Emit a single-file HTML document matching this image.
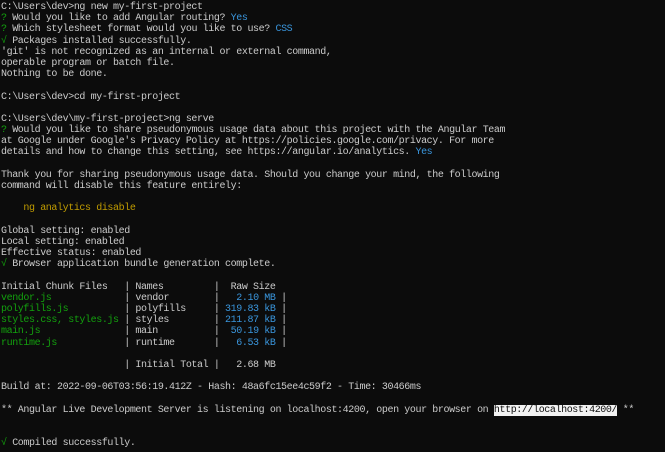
<!DOCTYPE html>
<html><head><meta charset="utf-8"><style>
html,body{margin:0;padding:0;background:#0c0c0c;width:665px;height:452px;overflow:hidden}
pre{margin:0;position:absolute;left:1px;top:2px;font-family:"Liberation Mono",monospace;font-size:10px;letter-spacing:-0.4px;line-height:11.18px;color:#cccccc;white-space:pre}
.g{color:#13a10e}.c{color:#3a96dd}.y{color:#c19c00}
.h{background:#f2f2f2;color:#0c0c0c}
</style></head><body><pre>C:\Users\dev&gt;ng new my-first-project
<span class="g">?</span> Would you like to add Angular routing? <span class="c">Yes</span>
<span class="g">?</span> Which stylesheet format would you like to use? <span class="c">CSS</span>
<span class="g">√</span> Packages installed successfully.
'git' is not recognized as an internal or external command,
operable program or batch file.
Nothing to be done.

C:\Users\dev&gt;cd my-first-project

C:\Users\dev\my-first-project&gt;ng serve
<span class="g">?</span> Would you like to share pseudonymous usage data about this project with the Angular Team
at Google under Google's Privacy Policy at https://policies.google.com/privacy. For more
details and how to change this setting, see https://angular.io/analytics. <span class="c">Yes</span>

Thank you for sharing pseudonymous usage data. Should you change your mind, the following
command will disable this feature entirely:

    <span class="y">ng analytics disable</span>

Global setting: enabled
Local setting: enabled
Effective status: enabled
<span class="g">√</span> Browser application bundle generation complete.

Initial Chunk Files   | Names         |  Raw Size
<span class="g">vendor.js</span>             | vendor        | <span class="c">  2.10 MB</span> |
<span class="g">polyfills.js</span>          | polyfills     | <span class="c">319.83 kB</span> |
<span class="g">styles.css, styles.js</span> | styles        | <span class="c">211.87 kB</span> |
<span class="g">main.js</span>               | main          | <span class="c"> 50.19 kB</span> |
<span class="g">runtime.js</span>            | runtime       | <span class="c">  6.53 kB</span> |

                      | Initial Total |   2.68 MB

Build at: 2022-09-06T03:56:19.412Z - Hash: 48a6fc15ee4c59f2 - Time: 30466ms

** Angular Live Development Server is listening on localhost:4200, open your browser on <span class="h">http://localhost:4200/</span> **


<span class="g">√</span> Compiled successfully.</pre></body></html>
